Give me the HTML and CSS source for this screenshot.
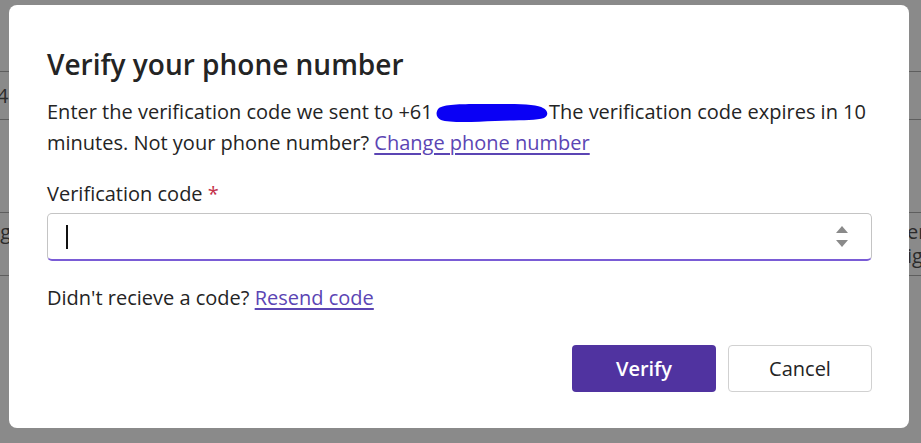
FILE: index.html
```html
<!DOCTYPE html>
<html lang="en">
<head>
<meta charset="utf-8">
<title>Verify your phone number</title>
<link rel="stylesheet" href="styles.css">
</head>
<body>
<div class="page">
  <div class="row row-a"></div>
  <div class="row row-b"><span class="bg-left">4</span></div>
  <div class="row row-c"></div>
  <div class="row row-d">
    <div class="bg-cell bg-left-cell"><span>ng</span><span>g</span></div>
    <div class="bg-cell bg-right-cell"><span>er</span><span>ig</span></div>
  </div>
  <div class="row row-e"></div>
</div>

<div class="modal" role="dialog" aria-labelledby="title">
  <h1 id="title" class="title">Verify your phone number</h1>
  <p class="desc">Enter the verification code we sent to +61 <svg class="scribble" width="114" height="24" viewBox="0 0 114 24" aria-hidden="true"><path d="M4 8 C10 3 40 4 70 4 C90 4 104 5 108 8 C113 10 114 16 109 18 C100 21 80 20 60 21 C40 22 14 23 6 20 C1 18 0 12 4 8 Z" fill="#0a00f5"/></svg>The verification code expires in 10 minutes. Not your phone number? <a href="#" class="link">Change phone number</a></p>

  <div class="field">
    <label class="label">Verification code <span class="req">*</span></label>
    <div class="input">
      <span class="caret"></span>
      <span class="spin">
        <svg width="12" height="7" viewBox="0 0 12 7"><path d="M6 0 L12 7 L0 7 Z" fill="#8a8a8a"/></svg>
        <svg width="12" height="7" viewBox="0 0 12 7"><path d="M0 0 L12 0 L6 7 Z" fill="#8a8a8a"/></svg>
      </span>
    </div>
  </div>

  <p class="resend">Didn't recieve a code? <a href="#" class="link">Resend code</a></p>

  <div class="actions">
    <button class="btn btn-primary">Verify</button>
    <button class="btn btn-secondary">Cancel</button>
  </div>
</div>
</body>
</html>
```

FILE: styles.css
```css
* { box-sizing: border-box; }

html, body {
  margin: 0;
  padding: 0;
  width: 921px;
  height: 443px;
  overflow: hidden;
}

body {
  background: #8a8a8a;
  font-family: "Open Sans", "Noto Sans", sans-serif;
  color: #242424;
  position: relative;
}

/* dimmed page behind the overlay */
.page {
  display: flex;
  flex-direction: column;
  color: #2b2b2b;
  font-size: 20px;
}
.row { border-bottom: 1px solid #5e5e5e; }
.row-a { height: 72px; }
.row-b { height: 48px; display: flex; align-items: center; }
.row-c { height: 93px; }
.row-d {
  height: 63px;
  display: flex;
  justify-content: space-between;
  align-items: center;
}
.row-e { border-bottom: none; }
.bg-left { margin-left: -3px; }
.bg-cell { display: flex; flex-direction: column; line-height: 24px; }
.bg-left-cell { margin-left: -12px; }
.bg-right-cell { margin-right: -6px; align-items: flex-start; width: 20px; }

/* dialog */
.modal {
  position: absolute;
  left: 9px;
  top: 5px;
  width: 900px;
  height: 423px;
  background: #ffffff;
  border-radius: 8px;
  padding: 39px 37px 0 38px;
  display: flex;
  flex-direction: column;
}

.title {
  margin: 0;
  font-size: 28px;
  font-weight: 600;
  line-height: 40px;
  color: #242424;
}

.desc {
  margin: 12px -20px 0 0;
  font-size: 20px;
  line-height: 31px;
}

.scribble {
  vertical-align: -5px;
  margin-left: -3px;
}

.link {
  color: #5b45b4;
  text-decoration: underline;
  text-underline-offset: 3px;
}

.field {
  margin-top: 22px;
  display: flex;
  flex-direction: column;
}

.label {
  font-size: 20px;
  line-height: 28px;
}
.req { color: #c4314b; }

.input {
  margin-top: 5px;
  height: 48px;
  border: 1px solid #c4c4c4;
  border-bottom: 2px solid #7a5cd6;
  border-radius: 5px;
  display: flex;
  align-items: center;
  justify-content: space-between;
  padding: 0 23px 0 18px;
}
.caret {
  width: 2px;
  height: 24px;
  background: #111;
}
.spin {
  display: flex;
  flex-direction: column;
  gap: 7px;
}
.spin svg { display: block; }

.resend {
  margin: 22px 0 0;
  font-size: 20px;
  line-height: 30px;
}

.actions {
  margin-top: 32px;
  display: flex;
  justify-content: flex-end;
  gap: 12px;
}

.btn {
  height: 47px;
  width: 144px;
  border-radius: 4px;
  font-family: inherit;
  font-size: 20px;
  font-weight: 600;
  cursor: pointer;
}
.btn-primary {
  background: #5033a0;
  color: #ffffff;
  border: none;
}
.btn-secondary {
  background: #ffffff;
  color: #242424;
  border: 1px solid #d1d1d1;
  font-weight: 500;
}
```
